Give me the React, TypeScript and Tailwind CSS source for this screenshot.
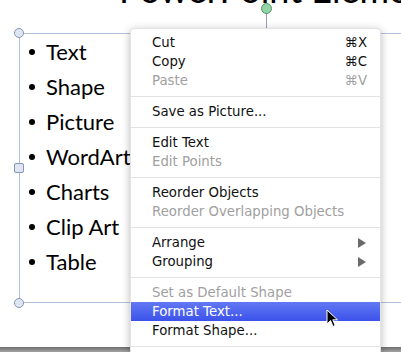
import React from "react";

type Item =
  | { kind: "item"; label: string; disabled?: boolean; shortcut?: string; submenu?: boolean; active?: boolean }
  | { kind: "sep" };

const items: Item[] = [
  { kind: "item", label: "Cut", shortcut: "⌘X" },
  { kind: "item", label: "Copy", shortcut: "⌘C" },
  { kind: "item", label: "Paste", shortcut: "⌘V", disabled: true },
  { kind: "sep" },
  { kind: "item", label: "Save as Picture..." },
  { kind: "sep" },
  { kind: "item", label: "Edit Text" },
  { kind: "item", label: "Edit Points", disabled: true },
  { kind: "sep" },
  { kind: "item", label: "Reorder Objects" },
  { kind: "item", label: "Reorder Overlapping Objects", disabled: true },
  { kind: "sep" },
  { kind: "item", label: "Arrange", submenu: true },
  { kind: "item", label: "Grouping", submenu: true },
  { kind: "sep" },
  { kind: "item", label: "Set as Default Shape", disabled: true },
  { kind: "item", label: "Format Text...", active: true },
  { kind: "item", label: "Format Shape..." },
  { kind: "sep" },
];

const bullets = ["Text", "Shape", "Picture", "WordArt", "Charts", "Clip Art", "Table"];

function Handle({ className }: { className: string }) {
  return (
    <div
      className={`absolute w-[10px] h-[10px] rounded-full border border-[#8696b6] bg-[#dfe6f2] ${className}`}
    />
  );
}

export default function App() {
  return (
    <div className="relative w-[401px] h-[352px] overflow-hidden bg-white">
      {/* Title */}
      <div
        className="absolute left-[119px] top-[-29px] whitespace-nowrap text-[36px] leading-[36px] text-black"
        style={{ fontFamily: "Lato, 'Open Sans', sans-serif" }}
      >
        PowerPoint Elements
      </div>

      {/* Text box */}
      <div className="absolute left-[19px] top-[33px] w-[440px] h-[270px] border border-[#b4c1da]">
        <ul
          className="flex flex-col pt-0 pl-[9px] text-[22px] leading-[35px] text-black"
          style={{ fontFamily: "Lato, 'Open Sans', sans-serif" }}
        >
          {bullets.map((b) => (
            <li key={b} className="flex items-center">
              <span className="w-[6px] h-[6px] rounded-full bg-black mr-[11px]" />
              <span>{b}</span>
            </li>
          ))}
        </ul>
      </div>

      {/* Handles */}
      <Handle className="left-[14px] top-[28px]" />
      <div className="absolute left-[14px] top-[163px] w-[10px] h-[10px] rounded-[2px] border border-[#8696b6] bg-[#dfe6f2]" />
      <Handle className="left-[14px] top-[298px]" />
      <div className="absolute left-[266px] top-[12px] w-px h-[21px] bg-[#8fa0bf]" />
      <div className="absolute left-[261px] top-[3px] w-[11px] h-[11px] rounded-full border border-[#4f9a6a] bg-[#93d3a6]" />

      {/* Bottom bar */}
      <div className="absolute left-0 bottom-0 w-full h-[5px] bg-gradient-to-b from-[#6e6e6e] to-[#a5a5a5]" />

      {/* Context menu */}
      <div
        className="absolute left-[130px] top-[28px] w-[251px] h-[340px] bg-white rounded-[4px] pt-[4px] shadow-[0_2px_8px_rgba(0,0,0,0.28)] border border-[#e4e4e4]"
        style={{ fontFamily: "'DejaVu Sans', sans-serif" }}
      >
        {items.map((it, i) =>
          it.kind === "sep" ? (
            <div key={i} className="h-[12px] flex items-center">
              <div className="w-full h-px bg-[#e3e3e3]" />
            </div>
          ) : (
            <div
              key={i}
              className={`h-[19px] flex items-center justify-between pl-[21px] pr-[13px] text-[13.3px] leading-[19px] ${
                it.active
                  ? "bg-gradient-to-b from-[#6378f4] to-[#3c51ea] text-white"
                  : it.disabled
                  ? "text-[#a0a0a0]"
                  : "text-[#111]"
              }`}
            >
              <span>{it.label}</span>
              {it.shortcut && <span>{it.shortcut}</span>}
              {it.submenu && (
                <svg width="8" height="10" viewBox="0 0 8 10" className="mr-[1px]">
                  <path d="M0 0 L8 5 L0 10 Z" fill="#6a6a6a" />
                </svg>
              )}
            </div>
          )
        )}
      </div>

      {/* Cursor */}
      <svg className="absolute left-[326px] top-[309px]" width="14" height="20" viewBox="0 0 14 20">
        <path d="M1 1 L1 15 L4.5 11.5 L7 17.5 L9.2 16.5 L6.8 10.8 L11.5 10.8 Z" fill="#000" stroke="#fff" strokeWidth="1" />
      </svg>
    </div>
  );
}
